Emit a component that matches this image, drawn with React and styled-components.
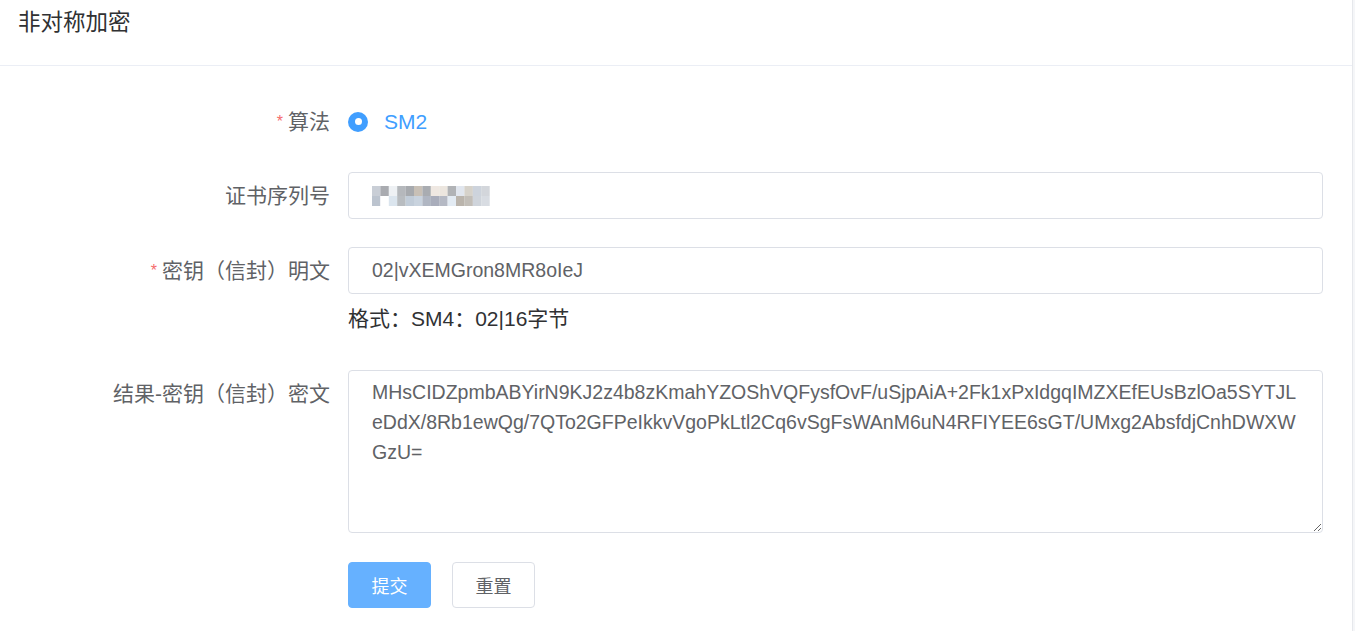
import styled, { createGlobalStyle } from "styled-components";

const GlobalStyle = createGlobalStyle`
  html, body {
    margin: 0;
    padding: 0;
    background: #f5f6f8;
  }
  body {
    font-family: "Liberation Sans", Arial, "Noto Sans CJK SC", sans-serif;
  }
`;

const Card = styled.div`
  width: 1353px;
  height: 631px;
  background: #fff;
  border-right: 1px solid #e6e8ec;
  box-sizing: border-box;
  overflow: hidden;
`;

const Header = styled.div`
  height: 66px;
  box-sizing: border-box;
  padding: 10px 18px 0;
  border-bottom: 1px solid #ebeef5;
  font-size: 22.5px;
  line-height: 26px;
  color: #303133;
`;

const Form = styled.div`
  padding-top: 32px;
`;

const FormItem = styled.div`
  display: flex;
  align-items: flex-start;
  margin-bottom: ${(props) => props.mb || 28}px;
`;

const Label = styled.div`
  width: 348px;
  flex-shrink: 0;
  box-sizing: border-box;
  padding-right: 18px;
  text-align: right;
  font-size: 21px;
  line-height: 47px;
  color: #606266;
`;

const Star = styled.span`
  color: #f56c6c;
  font-size: 16px;
  margin-right: 5px;
  position: relative;
  top: -2px;
`;

const Content = styled.div`
  width: 975px;
  display: flex;
  flex-direction: column;
`;

const RadioWrap = styled.div`
  display: flex;
  align-items: center;
  height: 47px;
`;

const RadioDot = styled.span`
  width: 20px;
  height: 20px;
  border-radius: 50%;
  background: #409eff;
  display: flex;
  align-items: center;
  justify-content: center;

  &::after {
    content: "";
    width: 7px;
    height: 7px;
    border-radius: 50%;
    background: #fff;
  }
`;

const RadioText = styled.span`
  margin-left: 16px;
  font-size: 21px;
  color: #409eff;
`;

const Input = styled.div`
  height: 47px;
  box-sizing: border-box;
  border: 1px solid #dcdfe6;
  border-radius: 4px;
  padding: 0 23px;
  display: flex;
  align-items: center;
  font-size: 19.5px;
  color: #606266;
`;

const Help = styled.div`
  font-size: 21px;
  line-height: 30px;
  margin-top: 10px;
  color: #303133;
`;

const TextArea = styled.textarea`
  display: block;
  width: 975px;
  height: 163px;
  box-sizing: border-box;
  border: 1px solid #dcdfe6;
  border-radius: 4px;
  padding: 6px 23px;
  font-family: "Liberation Sans", Arial, sans-serif;
  font-size: 19.5px;
  line-height: 30px;
  color: #606266;
  resize: vertical;
  outline: none;
  white-space: pre;
  overflow: hidden;
`;

const Buttons = styled.div`
  display: flex;
  gap: 21px;
`;

const Button = styled.button`
  width: 83px;
  height: 46px;
  box-sizing: border-box;
  border-radius: 4px;
  font-family: "Noto Sans CJK SC", sans-serif;
  font-size: 18px;
  border: 1px solid ${(props) => (props.primary ? "#66b1ff" : "#dcdfe6")};
  background: ${(props) => (props.primary ? "#66b1ff" : "#fff")};
  color: ${(props) => (props.primary ? "#fff" : "#606266")};
  padding: 0;
`;

const mosaic = [
  ["#c9ced6", "#a9abb0", "#eef1f4", "#b5b8bc", "#a7aaae", "#c8c0b6", "#a9acb1", "#efe8e2", "#ece6df", "#b1b3b6", "#e1e6ee", "#d6d2ca", "#cdd3dc", "#d3d6db"],
  ["#bcc4cf", "#ffffff", "#dbe5ee", "#b8bcc0", "#c1ccd8", "#c9d3de", "#b0b6c2", "#a9adbb", "#b5b9c4", "#e3ebf3", "#bab4ac", "#c2beb8", "#cfd4db", "#d8dce2"],
];

const Mosaic = () => (
  <svg width="118" height="24" viewBox="0 0 118 24" style={{ display: "block" }}>
    {mosaic.map((row, r) =>
      row.map((c, i) => (
        <rect key={`${r}-${i}`} x={i * 8.4} y={2 + r * 10} width="8.5" height="10" fill={c} />
      ))
    )}
  </svg>
);

const cipher = [
  "MHsCIDZpmbABYirN9KJ2z4b8zKmahYZOShVQFysfOvF/uSjpAiA+2Fk1xPxIdgqIMZXEfEUsBzlOa5SYTJL",
  "eDdX/8Rb1ewQg/7QTo2GFPeIkkvVgoPkLtl2Cq6vSgFsWAnM6uN4RFIYEE6sGT/UMxg2AbsfdjCnhDWXW",
  "GzU=",
].join("\n");

const App = () => (
  <>
    <GlobalStyle />
    <Card>
      <Header>非对称加密</Header>
      <Form>
        <FormItem mb={25}>
          <Label>
            <Star>*</Star>算法
          </Label>
          <Content>
            <RadioWrap>
              <RadioDot />
              <RadioText>SM2</RadioText>
            </RadioWrap>
          </Content>
        </FormItem>

        <FormItem>
          <Label>证书序列号</Label>
          <Content>
            <Input>
              <Mosaic />
            </Input>
          </Content>
        </FormItem>

        <FormItem mb={36}>
          <Label>
            <Star>*</Star>密钥（信封）明文
          </Label>
          <Content>
            <Input>02|vXEMGron8MR8oIeJ</Input>
            <Help>格式：SM4：02|16字节</Help>
          </Content>
        </FormItem>

        <FormItem mb={29}>
          <Label>结果-密钥（信封）密文</Label>
          <Content>
            <TextArea readOnly value={cipher} />
          </Content>
        </FormItem>

        <FormItem>
          <Label />
          <Buttons>
            <Button primary>提交</Button>
            <Button>重置</Button>
          </Buttons>
        </FormItem>
      </Form>
    </Card>
  </>
);

export default App;
